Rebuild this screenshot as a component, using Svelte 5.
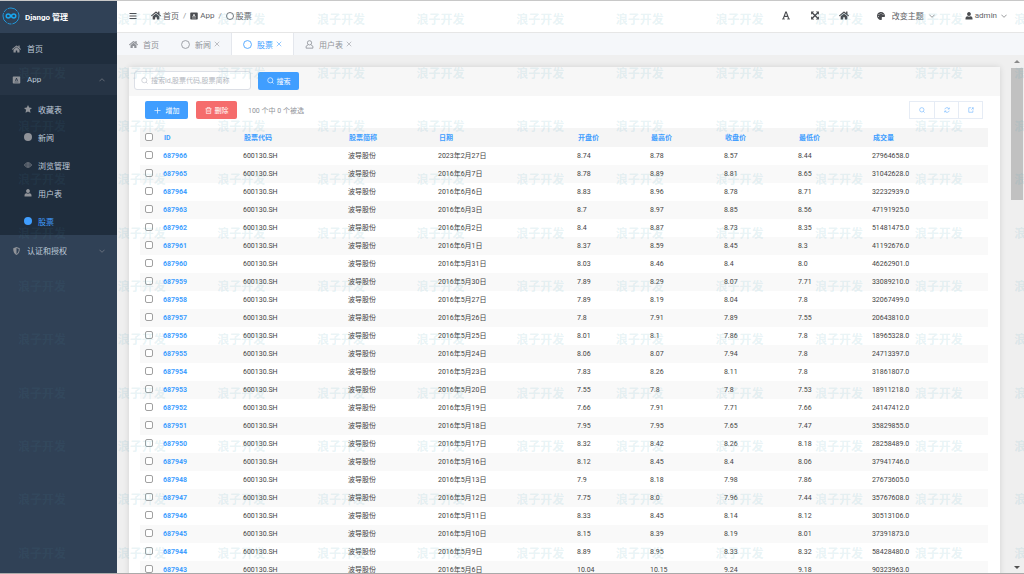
<script>
  const menu = [
    { icon: 'star', label: '收藏表' },
    { icon: 'dot', label: '新闻' },
    { icon: 'eye', label: '浏览管理' },
    { icon: 'user', label: '用户表' },
    { icon: 'dot', label: '股票', active: true }
  ]

  const tabs = [
    { icon: 'home', label: '首页' },
    { icon: 'circle', label: '新闻', closable: true },
    { icon: 'circle', label: '股票', closable: true, active: true },
    { icon: 'userLine', label: '用户表', closable: true }
  ]

  const columns = [
    { label: 'ID', size: 80 },
    { label: '股票代码', size: 105 },
    { label: '股票简称', size: 90 },
    { label: '日期', size: 139 },
    { label: '开盘价', size: 73 },
    { label: '最高价', size: 74 },
    { label: '收盘价', size: 74 },
    { label: '最低价', size: 74 },
    { label: '成交量', size: 121 }
  ]
  const checkSize = 18
  const total = columns.reduce((sum, c) => sum + c.size, checkSize)

  const code = '600130.SH'
  const name = '波导股份'

  // id, date, open, high, close, low, volume
  const rows = [
    [687966, '2023年2月27日', '8.74', '8.78', '8.57', '8.44', '27964658.0'],
    [687965, '2016年6月7日', '8.78', '8.89', '8.81', '8.65', '31042628.0'],
    [687964, '2016年6月6日', '8.83', '8.96', '8.78', '8.71', '32232939.0'],
    [687963, '2016年6月3日', '8.7', '8.97', '8.85', '8.56', '47191925.0'],
    [687962, '2016年6月2日', '8.4', '8.87', '8.73', '8.35', '51481475.0'],
    [687961, '2016年6月1日', '8.37', '8.59', '8.45', '8.3', '41192676.0'],
    [687960, '2016年5月31日', '8.03', '8.46', '8.4', '8.0', '46262901.0'],
    [687959, '2016年5月30日', '7.89', '8.29', '8.07', '7.71', '33089210.0'],
    [687958, '2016年5月27日', '7.89', '8.19', '8.04', '7.8', '32067499.0'],
    [687957, '2016年5月26日', '7.8', '7.91', '7.89', '7.55', '20643810.0'],
    [687956, '2016年5月25日', '8.01', '8.1', '7.86', '7.8', '18965328.0'],
    [687955, '2016年5月24日', '8.06', '8.07', '7.94', '7.8', '24713397.0'],
    [687954, '2016年5月23日', '7.83', '8.26', '8.11', '7.8', '31861807.0'],
    [687953, '2016年5月20日', '7.55', '7.8', '7.8', '7.53', '18911218.0'],
    [687952, '2016年5月19日', '7.66', '7.91', '7.71', '7.66', '24147412.0'],
    [687951, '2016年5月18日', '7.95', '7.95', '7.65', '7.47', '35829855.0'],
    [687950, '2016年5月17日', '8.32', '8.42', '8.26', '8.18', '28258489.0'],
    [687949, '2016年5月16日', '8.12', '8.45', '8.4', '8.06', '37941746.0'],
    [687948, '2016年5月13日', '7.9', '8.18', '7.98', '7.86', '27673605.0'],
    [687947, '2016年5月12日', '7.75', '8.0', '7.96', '7.44', '35767608.0'],
    [687946, '2016年5月11日', '8.33', '8.45', '8.14', '8.12', '30513106.0'],
    [687945, '2016年5月10日', '8.15', '8.39', '8.19', '8.01', '37391873.0'],
    [687944, '2016年5月9日', '8.89', '8.95', '8.33', '8.32', '58428480.0'],
    [687943, '2016年5月6日', '10.04', '10.15', '9.24', '9.18', '90323963.0']
  ]

  let query = $state('')
  let selected = $state([])

  let allSelected = $derived(selected.length === rows.length)

  function toggleAll() {
    selected = allSelected ? [] : rows.map((row) => row[0])
  }
</script>

{#snippet icon(type)}
  {#if type === 'home'}
    <svg class="icon" viewBox="0 0 576 512" fill="currentColor"><path d="M280.37 148.26L96 300.11V464a16 16 0 0 0 16 16l112.06-.29a16 16 0 0 0 15.92-16V368a16 16 0 0 1 16-16h64a16 16 0 0 1 16 16v95.64a16 16 0 0 0 16 16.05L464 480a16 16 0 0 0 16-16V300L295.67 148.26a12.19 12.19 0 0 0-15.3 0zM571.6 251.47L488 182.56V44.05a12 12 0 0 0-12-12h-56a12 12 0 0 0-12 12v72.61L318.47 43a48 48 0 0 0-61 0L4.34 251.47a12 12 0 0 0-1.6 16.9l25.5 31A12 12 0 0 0 45.15 301l235.22-193.74a12.19 12.19 0 0 1 15.3 0L530.9 301a12 12 0 0 0 16.9-1.6l25.5-31a12 12 0 0 0-1.7-16.93z" /></svg>
  {:else if type === 'palette'}
    <svg class="icon" viewBox="0 0 512 512" fill="currentColor"><path d="M204.3 5C104.9 24.4 24.8 104.3 5.2 203.4c-37 187 131.7 326.4 258.8 306.7 41.2-6.4 61.4-54.6 42.5-91.7-23.1-45.4 9.9-98.4 60.9-98.4h79.7c35.8 0 64.8-29.6 64.9-65.3C511.5 97.1 368.1-26.9 204.3 5zM96 320c-17.7 0-32-14.3-32-32s14.3-32 32-32 32 14.3 32 32-14.3 32-32 32zm32-128c-17.7 0-32-14.3-32-32s14.3-32 32-32 32 14.3 32 32-14.3 32-32 32zm128-64c-17.7 0-32-14.3-32-32s14.3-32 32-32 32 14.3 32 32-14.3 32-32 32zm128 64c-17.7 0-32-14.3-32-32s14.3-32 32-32 32 14.3 32 32-14.3 32-32 32z" /></svg>
  {:else}
    <svg class="icon" viewBox="0 0 16 16" fill="none" stroke="currentColor" stroke-width="1.5">
      {#if type === 'app'}
        <path fill="currentColor" stroke="none" fill-rule="evenodd" d="M2 1h12a1.500 1.500 0 0 1 1.500 1.500v11A1.500 1.500 0 0 1 14 15H2a1.500 1.500 0 0 1-1.500-1.500v-11A1.500 1.500 0 0 1 2 1zM7.300 4L4.800 10h1.300l.6-1.500h2.600l.6 1.500h1.300L8.700 4zM8 5.500L8.800 7.500H7.200zM4 11.700v.9h8v-.9z" />
      {:else if type === 'circle'}
        <circle cx="8" cy="8" r="7" />
      {:else if type === 'dot'}
        <circle cx="8" cy="8" r="8" fill="currentColor" stroke="none" />
      {:else if type === 'star'}
        <path fill="currentColor" stroke="none" d="M8 0l2.400 5.100 5.600.7-4.100 3.900 1.100 5.800L8 12.800l-5 2.700 1.100-5.800L0 5.800l5.600-.7z" />
      {:else if type === 'eye'}
        <path d="M1 8c3.500-6 10.500-6 14 0-3.500 6-10.500 6-14 0z" />
        <circle cx="8" cy="8" r="2.500" />
      {:else if type === 'user'}
        <path fill="currentColor" stroke="none" d="M8 0c5 0 5 8 0 8S3 0 8 0zM1 15v-2c0-3 2-4.500 4-4.500 2 1 4 1 6 0 2 0 4 1.500 4 4.500v2z" />
      {:else if type === 'userLine'}
        <circle cx="8" cy="5" r="3.800" />
        <path d="M5.500 8.500L2 11v3.500h12V11l-3.500-2.500" />
      {:else if type === 'shield'}
        <path fill="currentColor" stroke="none" fill-rule="evenodd" d="M8 0l6.500 2.500C15 9 12.500 13.500 8 16 3.500 13.500 1 9 1.500 2.500zM8 2v11.800c3-2 4.600-5.300 4.600-10z" />
      {:else if type === 'bars'}
        <path d="M1 3h14M1 8h14M1 13h14" stroke-width="2" />
      {:else if type === 'font'}
        <path d="M3 14L7.500 2h1L13 14M5 9.500h6" stroke-width="2" />
        <path d="M1 14.200h5M10 14.200h5" />
      {:else if type === 'expand'}
        <path d="M3 3l10 10M13 3L3 13" stroke-width="2.500" />
        <path fill="currentColor" stroke="none" d="M1 1h5.500L1 6.500zM15 1v5.500L9.500 1zM1 15V9.500L6.500 15zM15 15H9.500L15 9.500z" />
      {:else if type === 'down'}
        <path d="M1 4.500l7 7 7-7" />
      {:else if type === 'up'}
        <path d="M1 11.500l7-7 7 7" />
      {:else if type === 'close'}
        <path d="M2 2l12 12M14 2L2 14" />
      {:else if type === 'search'}
        <circle cx="7.500" cy="7.500" r="5.800" />
        <path d="M11.500 11.500L15 15" />
      {:else if type === 'plus'}
        <path d="M8 1v14M1 8h14" />
      {:else if type === 'trash'}
        <path d="M1 4h14M5 4V1h6v3M3 4v11h10V4M6.500 7v5M9.500 7v5" />
      {:else if type === 'refresh'}
        <path d="M2 6a6.300 6.300 0 0 1 11.500-1M14 10a6.300 6.300 0 0 1-11.500 1M14 1.500V5.500h-4M2 14.500v-4h4" />
      {:else if type === 'export'}
        <path d="M8 2H2v12h11V9M10 2h4v5M14 2L9 7" />
      {/if}
    </svg>
  {/if}
{/snippet}

<div class="app">
  <div class="body">
    <aside class="sidebar">
      <div class="brand">
        <svg class="logo" viewBox="0 0 36 36" fill="none">
          <circle cx="18" cy="18" r="16" stroke="#2196d8" stroke-width="2" stroke-dasharray="22 2 8 2" />
          <path d="M18 18c-2-3-4-4-5.500-4a4 4 0 0 0 0 8c1.500 0 3.500-1 5.500-4s4-4 5.500-4a4 4 0 0 1 0 8c-1.500 0-3.500-1-5.500-4z" stroke="#19a8f0" stroke-width="3" />
        </svg>
        <strong>Django 管理</strong>
      </div>
      <nav>
        <a class="item dark" href="#home">{@render icon('home')}<span>首页</span></a>
        <a class="item open" href="#app">{@render icon('app')}<span>App</span><i class="caret">{@render icon('up')}</i></a>
        <div class="submenu">
          {#each menu as entry}
            <a class="sub" class:active={entry.active} href="#{entry.label}">{@render icon(entry.icon)}<span>{entry.label}</span></a>
          {/each}
        </div>
        <a class="item" href="#auth">{@render icon('shield')}<span>认证和授权</span><i class="caret">{@render icon('down')}</i></a>
      </nav>
    </aside>

    <div class="main">
      <header class="topbar">
        <button class="plain toggle" aria-label="菜单">{@render icon('bars')}</button>
        <div class="crumbs">
          <a href="#home">{@render icon('home')}首页</a>
          <span class="slash">/</span>
          <a href="#app">{@render icon('app')}App</a>
          <span class="slash">/</span>
          <a href="#stock">{@render icon('circle')}股票</a>
        </div>
        <div class="tools">
          <button class="plain" aria-label="字体">{@render icon('font')}</button>
          <button class="plain" aria-label="全屏">{@render icon('expand')}</button>
          <button class="plain" aria-label="主页">{@render icon('home')}</button>
        </div>
        <button class="plain theme">{@render icon('palette')}<span>改变主题</span><i class="caret">{@render icon('down')}</i></button>
        <button class="plain account">{@render icon('user')}<span>admin</span><i class="caret">{@render icon('down')}</i></button>
      </header>

      <div class="tabs">
        {#each tabs as tab}
          <div class="tab" class:active={tab.active}>
            <a href="#{tab.label}">{@render icon(tab.icon)}{tab.label}</a>
            {#if tab.closable}
              <button class="plain close" aria-label="关闭{tab.label}">{@render icon('close')}</button>
            {/if}
          </div>
        {/each}
      </div>

      <div class="frame">
        <div class="content">
          <section class="card">
            <form class="filters" onsubmit={(e) => e.preventDefault()}>
              <label class="search">
                {@render icon('search')}
                <input type="text" aria-label="搜索" placeholder="搜索id,股票代码,股票简称" bind:value={query} />
              </label>
              <button class="btn primary">{@render icon('search')}<span>搜索</span></button>
            </form>

            <div class="actions">
              <button class="btn primary add">{@render icon('plus')}<span>增加</span></button>
              <button class="btn danger">{@render icon('trash')}<span>删除</span></button>
              <span class="count">100 个中 {selected.length} 个被选</span>
              <div class="group">
                <button aria-label="查找">{@render icon('search')}</button>
                <button aria-label="刷新">{@render icon('refresh')}</button>
                <button aria-label="导出">{@render icon('export')}</button>
              </div>
            </div>

            <table>
              <colgroup>
                <col style="width: {(checkSize / total) * 100}%" />
                {#each columns as column}
                  <col style="width: {(column.size / total) * 100}%" />
                {/each}
              </colgroup>
              <thead>
                <tr>
                  <th><input type="checkbox" aria-label="全选" checked={allSelected} onchange={toggleAll} /></th>
                  {#each columns as column}
                    <th><a href="#sort">{column.label}</a></th>
                  {/each}
                </tr>
              </thead>
              <tbody>
                {#each rows as [id, ...values]}
                  <tr>
                    <td><input type="checkbox" aria-label="选择 {id}" value={id} bind:group={selected} /></td>
                    <td><a href="#{id}">{id}</a></td>
                    <td>{code}</td>
                    <td>{name}</td>
                    {#each values as value}
                      <td>{value}</td>
                    {/each}
                  </tr>
                {/each}
              </tbody>
            </table>
          </section>
        </div>
        <div class="scrollbar">
          <i class="arrow up"></i>
          <i class="thumb"></i>
          <i class="arrow down"></i>
        </div>
      </div>
    </div>
  </div>

  <div class="watermark" aria-hidden="true">
    <div class="marks">
      {#each Array(121) as _}
        <span>浪子开发</span>
      {/each}
    </div>
  </div>
</div>

<style>
  :global(body) {
    margin: 0;
  }

  .app {
    position: relative;
    height: 100vh;
    box-sizing: border-box;
    overflow: hidden;
    border-top: 1px solid #c8c8c8;
    border-bottom: 1px solid #aaa;
    font-family: Roboto, 'Noto Sans CJK SC', sans-serif;
    font-size: 8px;
    color: #606266;
  }

  .app :global(*) {
    box-sizing: border-box;
  }

  a {
    color: inherit;
    text-decoration: none;
  }

  button,
  input {
    font: inherit;
  }

  .icon {
    display: block;
    flex: none;
    width: 8px;
    height: 8px;
  }

  .plain {
    display: flex;
    align-items: center;
    padding: 0;
    border: 0;
    background: none;
    color: inherit;
    cursor: pointer;
  }

  .body {
    display: flex;
    height: 100%;
  }

  /* Sidebar */
  .sidebar {
    flex: none;
    width: 117px;
    background: #304156;
    color: #bfcbd9;
  }

  .brand {
    position: relative;
    z-index: 1;
    display: flex;
    align-items: center;
    gap: 5px;
    height: 32px;
    padding: 0 0 2px 2px;
    background: #304156;
    color: #fff;
  }

  .logo {
    width: 18px;
    height: 18px;
  }

  .item {
    display: flex;
    align-items: center;
    gap: 6px;
    height: 31px;
    padding: 0 12px;
  }

  .item .icon,
  .sub .icon {
    color: #909399;
  }

  .item .icon {
    width: 9px;
  }

  .item .caret {
    margin-left: auto;
  }

  .caret .icon {
    width: 6px;
    height: 6px;
  }

  .dark {
    background: #1f2d3d;
  }

  .open {
    background: #263445;
  }

  .submenu {
    background: #1f2d3d;
  }

  .sub {
    display: flex;
    align-items: center;
    gap: 6px;
    height: 28px;
    padding-left: 24px;
  }

  .sub.active,
  .sub.active .icon {
    color: #409eff;
  }

  /* Header */
  .main {
    display: flex;
    flex-direction: column;
    flex: 1;
    min-width: 0;
    background: #fff;
  }

  .topbar {
    display: flex;
    align-items: center;
    flex: none;
    height: 32px;
    padding: 0 17px 2px 12px;
    border-bottom: 1px solid #e6e6e6;
  }

  .topbar .icon {
    color: #4a4c50;
  }

  .toggle {
    margin-right: 14px;
  }

  .crumbs {
    display: flex;
    align-items: center;
    gap: 4px;
  }

  .crumbs a {
    display: flex;
    align-items: center;
    gap: 2px;
  }

  .crumbs a:first-child .icon,
  .tools .icon {
    width: 10px;
    height: 9px;
  }

  .slash {
    color: #909399;
  }

  .tools {
    display: flex;
    gap: 19px;
    margin-left: auto;
  }

  .theme {
    gap: 7px;
    margin: 0 30px 0 28px;
  }

  .theme .caret {
    margin-left: -2px;
  }

  .account {
    gap: 2px;
  }

  .account .caret {
    margin-left: 2px;
  }

  .tabs {
    display: flex;
    flex: none;
    height: 22px;
    padding-left: 1px;
    background: #f5f7fa;
    color: #909399;
  }

  .tab {
    display: flex;
    align-items: center;
    gap: 3px;
    padding: 0 11px;
  }

  .tab a {
    display: flex;
    align-items: center;
    gap: 5px;
  }

  .tab a .icon {
    width: 9px;
    height: 9px;
  }

  .tab.active {
    border: solid #e4e7ed;
    border-width: 0 1px;
    background: #fff;
    color: #409eff;
  }

  .close .icon {
    width: 6px;
    height: 6px;
  }

  /* Content */
  .frame {
    display: flex;
    flex: 1;
    min-height: 0;
    background: #efefef;
  }

  .content {
    flex: 1;
    min-width: 0;
    overflow: hidden;
    padding: 12px 11px 0 12px;
  }

  .card {
    background: #fff;
    box-shadow: 0 0 6px rgba(0, 0, 0, 0.12);
  }

  .filters {
    display: flex;
    align-items: center;
    gap: 7px;
    height: 29px;
    padding: 0 5px 2px;
    background: #f7f7f7;
    font-size: 7px;
  }

  .search {
    display: flex;
    align-items: center;
    gap: 3px;
    width: 117px;
    height: 19px;
    padding: 0 6px;
    border: 1px solid #dcdfe6;
    border-radius: 3px;
    background: #fff;
    color: #c0c4cc;
  }

  .search .icon,
  .btn .icon {
    width: 7px;
    height: 7px;
  }

  .search input {
    flex: 1;
    min-width: 0;
    padding: 0;
    border: 0;
    outline: 0;
    background: none;
    color: #606266;
  }

  .search input::placeholder {
    color: #b4b8c0;
  }

  .btn {
    display: flex;
    align-items: center;
    justify-content: center;
    gap: 3px;
    width: 41px;
    height: 18px;
    padding: 0;
    border: 0;
    border-radius: 2px;
    color: #fff;
    cursor: pointer;
  }

  .primary {
    background: #409eff;
  }

  .danger {
    background: #f56c6c;
  }

  .add {
    width: 43px;
    gap: 5px;
  }

  .actions {
    display: flex;
    align-items: center;
    gap: 8px;
    height: 32px;
    padding: 0 17px 4px 16px;
    font-size: 7px;
  }

  .count {
    margin-left: 3px;
    color: #909399;
  }

  .group {
    display: flex;
    margin-left: auto;
    border: 1px solid #e6ecf5;
  }

  .group button {
    display: flex;
    align-items: center;
    justify-content: center;
    width: 24px;
    height: 16px;
    padding: 0;
    border: 0;
    background: #fff;
    color: #66b1ff;
  }

  .group .icon {
    width: 6px;
    height: 6px;
  }

  .group button + button {
    border-left: 1px solid #e6ecf5;
  }

  table {
    width: calc(100% - 23px);
    margin: 0 12px 0 11px;
    border-collapse: collapse;
    table-layout: fixed;
    font-size: 7px;
    color: #444;
  }

  th,
  td {
    height: 18px;
    padding: 0 0 0 5px;
    line-height: 10px;
    text-align: left;
    white-space: nowrap;
  }

  th {
    height: 19px;
    padding-left: 6px;
    background: #f5f5f5;
  }

  th:first-child {
    padding-left: 5px;
  }

  th a,
  td a {
    color: #409eff;
    font-weight: bold;
  }

  tbody tr:nth-child(even) {
    background: #f9f9f9;
  }

  td input,
  th input {
    display: block;
    appearance: none;
    width: 8px;
    height: 8px;
    margin: 0 0 2px;
    border: 1px solid #a0a0a0;
    border-radius: 2px;
    background: #fff;
  }

  td input:checked,
  th input:checked {
    border-color: #409eff;
    background: #409eff;
  }

  .scrollbar {
    display: flex;
    flex-direction: column;
    align-items: center;
    flex: none;
    width: 13px;
    padding: 5px 1px 4px 0;
  }

  .arrow {
    border: 3px solid transparent;
  }

  .arrow.up {
    border-top: 0;
    border-bottom-color: #8a8a8a;
    margin-bottom: 5px;
  }

  .arrow.down {
    border-bottom: 0;
    border-top-color: #505050;
    margin-top: auto;
  }

  .thumb {
    width: 12px;
    height: 26%;
    background: #c1c1c1;
  }

  /* Watermark tiled over the whole window */
  .watermark {
    position: absolute;
    inset: 0;
    overflow: hidden;
    pointer-events: none;
  }

  .marks {
    position: absolute;
    inset: -9px -90px -6px 18px;
    display: grid;
    grid-template-columns: repeat(11, 1fr);
    grid-template-rows: repeat(11, 1fr);
    align-items: center;
    font-family: 'Noto Sans CJK SC', sans-serif;
    font-size: 12px;
    font-weight: bold;
    color: rgba(90, 170, 190, 0.15);
  }

  /* Fainter on the dark sidebar */
  .marks span:nth-child(11n + 1) {
    color: rgba(90, 170, 190, 0.08);
  }
</style>
